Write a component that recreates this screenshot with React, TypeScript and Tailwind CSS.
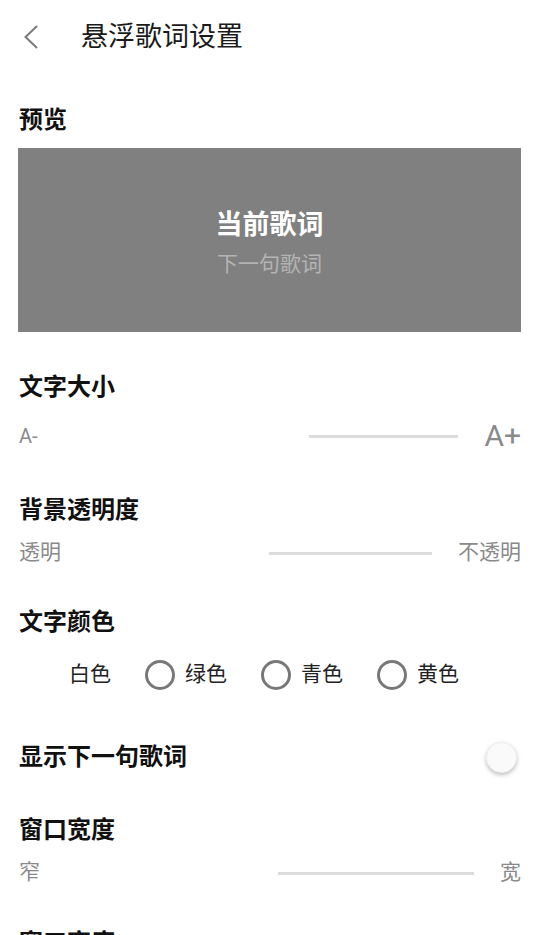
import React from 'react'

const FONT = "font-['Roboto','Noto_Sans_CJK_SC',sans-serif]"

function Heading({ children, className = '' }: { children: React.ReactNode; className?: string }) {
  return (
    <div className={`h-[32px] leading-[32px] text-[24px] font-bold text-[#111] ${className}`}>
      {children}
    </div>
  )
}

function SliderRow({
  left,
  right,
  track,
  className = '',
  leftClass = 'text-[21px]',
  rightClass = 'text-[21px]',
}: {
  left: string
  right: string
  track: string
  className?: string
  leftClass?: string
  rightClass?: string
}) {
  return (
    <div className={`h-[40px] flex items-center text-[#8a8a8a] ${className}`}>
      <span className={leftClass}>{left}</span>
      <div className="flex-1" />
      <div className={`h-[3px] bg-[#dcdcdc] mr-[26px] ${track}`} />
      <span className={rightClass}>{right}</span>
    </div>
  )
}

function Radio({ label, hidden }: { label: string; hidden?: boolean }) {
  return (
    <div className="flex items-center gap-[10px]">
      <div
        className={`w-[30px] h-[30px] rounded-full border-[3px] ${hidden ? 'border-white' : 'border-[#787878]'}`}
      />
      <span className="text-[21px] text-[#222]">{label}</span>
    </div>
  )
}

export default function App() {
  return (
    <div className={`${FONT} w-[537px] h-[935px] overflow-hidden bg-white`}>
      {/* top bar */}
      <div className="h-[74px] flex items-center">
        <svg className="ml-[22px]" width="18" height="26" viewBox="0 0 18 26" fill="none">
          <path d="M15 2 L3.5 13 L15 24" stroke="#7a7a7a" strokeWidth="2" />
        </svg>
        <span className="ml-[41px] text-[27px] text-[#1a1a1a]">悬浮歌词设置</span>
      </div>

      <div className="pl-[18px] pr-[16px]">
        <Heading className="mt-[30px] ml-px">预览</Heading>

        <div className="mt-[12px] h-[184px] bg-[#808080] flex flex-col items-center justify-center">
          <div className="text-[27px] font-bold text-white leading-[36px] mt-[6px]">当前歌词</div>
          <div className="text-[21px] text-[#b4b4b4] leading-[30px] mt-[6px]">下一句歌词</div>
        </div>

        <Heading className="mt-[39px] ml-px">文字大小</Heading>
        <SliderRow
          className="mt-[13px] ml-px"
          left="A-"
          right="A+"
          track="w-[149px]"
          leftClass="text-[20px]"
          rightClass="text-[30px] leading-none"
        />

        <Heading className="mt-[38px] ml-px">背景透明度</Heading>
        <SliderRow className="mt-[7px] ml-px" left="透明" right="不透明" track="w-[163px]" />

        <Heading className="mt-[33px] ml-px">文字颜色</Heading>
        <div className="mt-[17px] h-[40px] flex items-center gap-[34px] pl-[11px]">
          <Radio label="白色" hidden />
          <Radio label="绿色" />
          <Radio label="青色" />
          <Radio label="黄色" />
        </div>

        <div className="mt-[42px] h-[40px] flex items-center justify-between">
          <span className="text-[24px] font-bold text-[#111] ml-px">显示下一句歌词</span>
          <div className="w-[31px] h-[31px] rounded-full bg-[#fafafa] border border-[#efefef] shadow-[0_2px_4px_rgba(0,0,0,0.25)] mr-[4px]" />
        </div>

        <Heading className="mt-[37px] ml-px">窗口宽度</Heading>
        <SliderRow className="mt-[7px] ml-px" left="窄" right="宽" track="w-[196px]" />

        <Heading className="mt-[34px] ml-px">窗口高度</Heading>
      </div>
    </div>
  )
}
